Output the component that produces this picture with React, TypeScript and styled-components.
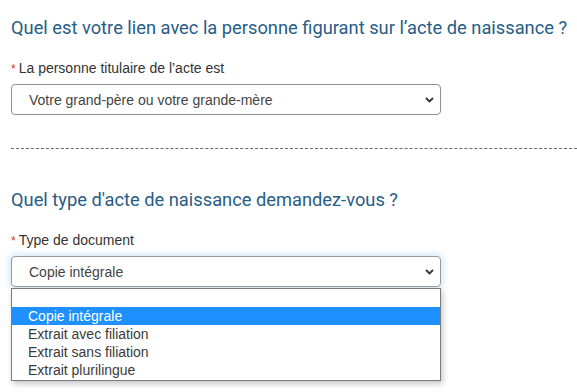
import React from "react";
import styled, { createGlobalStyle } from "styled-components";

const GlobalStyle = createGlobalStyle`
  html, body {
    margin: 0;
    padding: 0;
    background: #ffffff;
  }
  body {
    font-family: "Liberation Sans", Arial, sans-serif;
  }
`;

const Page = styled.div`
  width: 577px;
  height: 392px;
  overflow: hidden;
  padding-left: 11px;
  box-sizing: border-box;
`;

const Section = styled.section<{ $top: number }>`
  padding-top: ${({ $top }) => $top}px;
`;

const Heading = styled.h2`
  margin: 0;
  font-family: Roboto, "Noto Sans", sans-serif;
  font-weight: 400;
  font-size: 18.3px;
  line-height: 24px;
  color: #275d86;
  white-space: nowrap;
`;

const Label = styled.div`
  margin-top: 19px;
  font-size: 14px;
  line-height: 18px;
  color: #333333;
`;

const Star = styled.span`
  color: #d9302c;
  font-size: 12px;
  margin-right: 3px;
`;

const Field = styled.div`
  width: 430px;
  margin-top: 6px;
`;

const SelectBox = styled.div<{ $focus?: boolean }>`
  height: 31px;
  box-sizing: border-box;
  display: flex;
  align-items: center;
  justify-content: space-between;
  padding: 0 6px 0 17px;
  border: 1px solid ${({ $focus }) => ($focus ? "#9a9a9a" : "#8f8f8f")};
  border-radius: 4px;
  background: #ffffff;
  font-size: 14px;
  color: #444444;
  box-shadow: ${({ $focus }) =>
    $focus ? "0 0 6px 2px rgba(102, 175, 233, 0.3)" : "none"};
`;

const Chevron = () => (
  <svg width="9" height="6" viewBox="0 0 9 6">
    <path d="M1 1 L4.5 4.5 L8 1" fill="none" stroke="#333" strokeWidth="1.8" />
  </svg>
);

const Divider = styled.hr`
  margin: 33px 0 0;
  border: none;
  border-top: 1px dashed #6a6a6a;
  height: 0;
`;

const List = styled.ul`
  margin: 1px 0 0;
  padding: 0 0 1px;
  list-style: none;
  border: 1px solid #7a7a7a;
  background: #ffffff;
  box-shadow: 2px 3px 6px rgba(0, 0, 0, 0.22);
`;

const Option = styled.li<{ $active?: boolean }>`
  height: 18px;
  line-height: 18px;
  padding-left: 16px;
  font-size: 14px;
  color: ${({ $active }) => ($active ? "#ffffff" : "#3a3a3a")};
  background: ${({ $active }) => ($active ? "#1e90ff" : "transparent")};
`;

const options = [
  "",
  "Copie intégrale",
  "Extrait avec filiation",
  "Extrait sans filiation",
  "Extrait plurilingue",
];

export default function App() {
  return (
    <Page>
      <GlobalStyle />
      <Section $top={16}>
        <Heading>
          Quel est votre lien avec la personne figurant sur l’acte de naissance ?
        </Heading>
        <Label>
          <Star>*</Star>La personne titulaire de l’acte est
        </Label>
        <Field>
          <SelectBox>
            <span>Votre grand-père ou votre grande-mère</span>
            <Chevron />
          </SelectBox>
        </Field>
      </Section>
      <Divider />
      <Section $top={39}>
        <Heading>Quel type d'acte de naissance demandez-vous ?</Heading>
        <Label>
          <Star>*</Star>Type de document
        </Label>
        <Field>
          <SelectBox $focus>
            <span>Copie intégrale</span>
            <Chevron />
          </SelectBox>
          <List>
            {options.map((o, i) => (
              <Option key={i} $active={i === 1}>
                {o}
              </Option>
            ))}
          </List>
        </Field>
      </Section>
    </Page>
  );
}
